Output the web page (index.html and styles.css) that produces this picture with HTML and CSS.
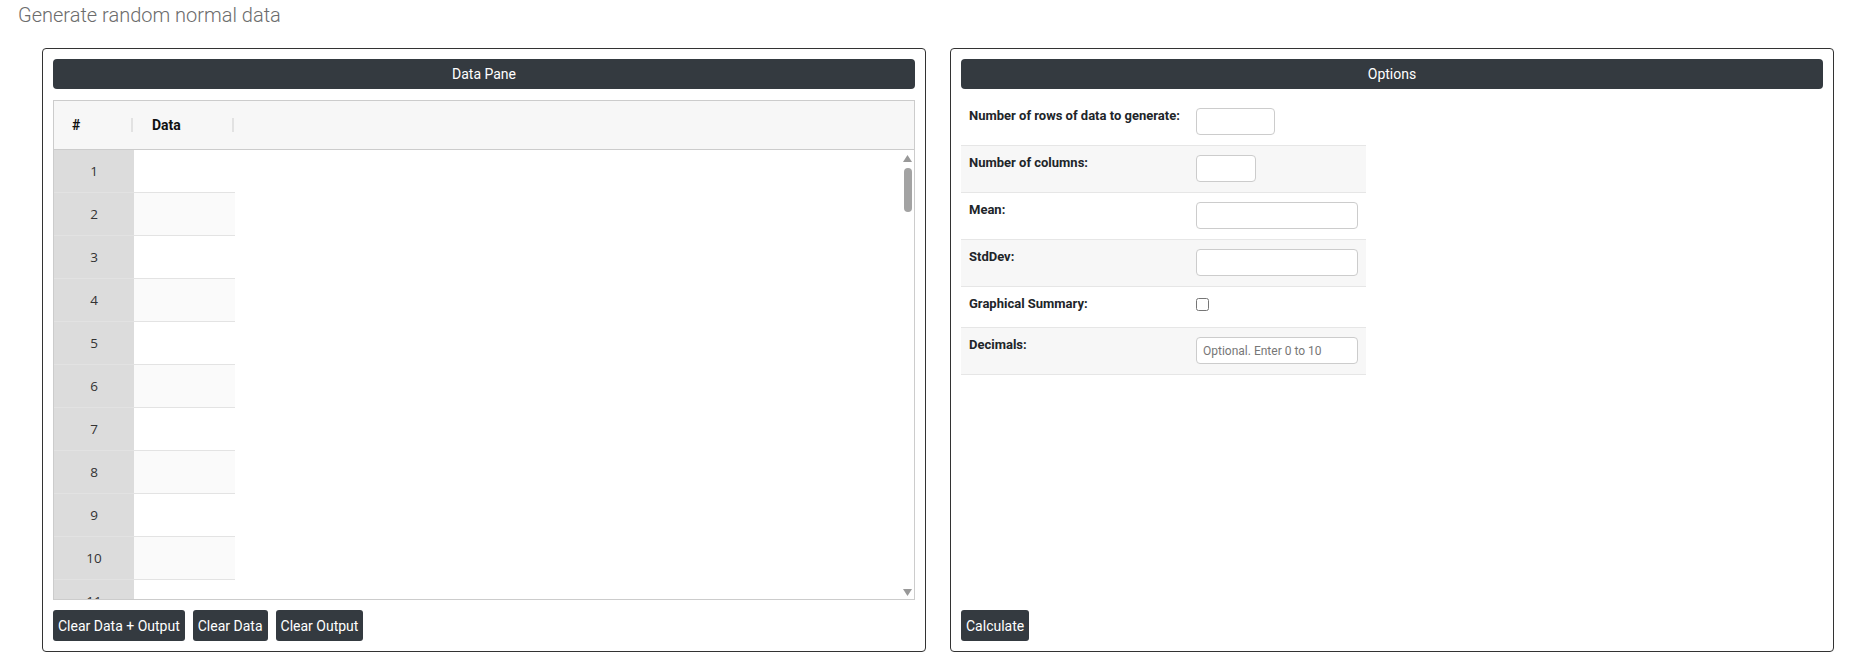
FILE: index.html
```html
<!DOCTYPE html>
<html lang="en">
<head>
    <meta charset="UTF-8">
    <meta name="viewport" content="width=device-width, initial-scale=1.0">
    <title>Generate random normal data</title>
    <link rel="stylesheet" href="styles.css">
</head>
<body>
    <h1 class="page-title">Generate random normal data</h1>
    <div class="panels">
        <div class="panel">
            <div class="panel-header">Data Pane</div>
            <div class="grid">
                <div class="grid-head">
                    <div class="hcell idx"><span class="hlabel">#</span><span class="hsep"></span></div>
                    <div class="hcell data"><span class="hlabel">Data</span><span class="hsep"></span></div>
                </div>
                <div class="grid-body">
                    <div class="grid-rows">
                        <div class="grow"><div class="gidx">1</div><div class="gcell"></div></div>
                        <div class="grow"><div class="gidx">2</div><div class="gcell"></div></div>
                        <div class="grow"><div class="gidx">3</div><div class="gcell"></div></div>
                        <div class="grow"><div class="gidx">4</div><div class="gcell"></div></div>
                        <div class="grow"><div class="gidx">5</div><div class="gcell"></div></div>
                        <div class="grow"><div class="gidx">6</div><div class="gcell"></div></div>
                        <div class="grow"><div class="gidx">7</div><div class="gcell"></div></div>
                        <div class="grow"><div class="gidx">8</div><div class="gcell"></div></div>
                        <div class="grow"><div class="gidx">9</div><div class="gcell"></div></div>
                        <div class="grow"><div class="gidx">10</div><div class="gcell"></div></div>
                        <div class="grow"><div class="gidx">11</div><div class="gcell"></div></div>
                    </div>
                    <div class="grid-fill"></div>
                    <div class="vscroll">
                        <svg class="arrow" width="9" height="7" viewBox="0 0 9 7"><polygon points="4.5,0 9,7 0,7" fill="#999"/></svg>
                        <div class="thumb"></div>
                        <div class="track-rest"></div>
                        <svg class="arrow" width="9" height="7" viewBox="0 0 9 7"><polygon points="0,0 9,0 4.5,7" fill="#999"/></svg>
                    </div>
                </div>
            </div>
            <div class="btn-row">
                <button class="btn">Clear Data + Output</button>
                <button class="btn">Clear Data</button>
                <button class="btn">Clear Output</button>
            </div>
        </div>
        <div class="panel">
            <div class="panel-header">Options</div>
            <table class="options">
                <tr>
                    <td class="opt-label">Number of rows of data to generate:</td>
                    <td><input type="text" class="opt-input w-rows"></td>
                </tr>
                <tr>
                    <td class="opt-label">Number of columns:</td>
                    <td><input type="text" class="opt-input w-cols"></td>
                </tr>
                <tr>
                    <td class="opt-label">Mean:</td>
                    <td><input type="text" class="opt-input w-full"></td>
                </tr>
                <tr>
                    <td class="opt-label">StdDev:</td>
                    <td><input type="text" class="opt-input w-full"></td>
                </tr>
                <tr class="check-row">
                    <td class="opt-label">Graphical Summary:</td>
                    <td><input type="checkbox" class="opt-check"></td>
                </tr>
                <tr>
                    <td class="opt-label">Decimals:</td>
                    <td><input type="text" class="opt-input w-full" placeholder="Optional. Enter 0 to 10"></td>
                </tr>
            </table>
            <div class="btn-row bottom">
                <button class="btn">Calculate</button>
            </div>
        </div>
    </div>
</body>
</html>
```

FILE: styles.css
```css
body {
    font-family: Roboto, "Liberation Sans", Arial, sans-serif;
    background-color: #fff;
    color: #212529;
    margin: 0;
    padding: 0;
}
.page-title {
    font-size: 20px;
    font-weight: 300;
    color: #6c6c6c;
    margin: 0;
    padding: 4px 0 0 18px;
    height: 48px;
    box-sizing: border-box;
    line-height: 23px;
}
.panels {
    display: flex;
    gap: 24px;
    padding: 0 36px 0 42px;
    height: 604px;
}
.panel {
    flex: 1;
    display: flex;
    flex-direction: column;
    border: 1px solid #333;
    border-radius: 4px;
    padding: 10px;
    min-width: 0;
}
.panel-header {
    background-color: #343a40;
    color: #fff;
    height: 30px;
    line-height: 30px;
    text-align: center;
    font-size: 14px;
    border-radius: 4px;
    margin-bottom: 10px;
}
.grid {
    border: 1px solid #ccc;
    height: 500px;
    box-sizing: border-box;
    display: flex;
    flex-direction: column;
    font-family: "Open Sans", sans-serif;
    margin-top: 1px;
}
.grid-head {
    display: flex;
    height: 48px;
    background-color: #f7f7f7;
    border-bottom: 1px solid #ccc;
}
.hcell {
    display: flex;
    align-items: center;
    font-family: Roboto, sans-serif;
    font-weight: bold;
    font-size: 14px;
    color: #111;
}
.hcell.idx {
    width: 80px;
}
.hcell.data {
    width: 101px;
}
.hlabel {
    flex: 1;
    padding-left: 18px;
}
.hsep {
    width: 2px;
    height: 14px;
    background-color: #e2e2e2;
    margin-right: 1px;
}
.grid-body {
    flex: 1;
    display: flex;
    overflow: hidden;
}
.grid-rows {
    display: flex;
    flex-direction: column;
}
.grow {
    display: flex;
    flex-shrink: 0;
    height: 43px;
}
.gidx {
    width: 80px;
    background-color: #dcdcdc;
    border-bottom: 1px solid #e2e2e2;
    display: flex;
    align-items: center;
    justify-content: center;
    font-size: 13.5px;
    color: #333;
}
.gcell {
    width: 101px;
    border-bottom: 1px solid #e3e3e3;
    background-color: #fff;
}
.grow:nth-child(even) .gcell {
    background-color: #fafafa;
}
.grid-fill {
    flex: 1;
}
.vscroll {
    width: 13px;
    display: flex;
    flex-direction: column;
    align-items: center;
    padding: 5px 0 3px;
}
.vscroll .arrow {
    flex-shrink: 0;
}
.thumb {
    width: 8px;
    height: 44px;
    border-radius: 4px;
    background-color: #a3a3a3;
    margin-top: 6px;
}
.track-rest {
    flex: 1;
}
.btn-row {
    display: flex;
    gap: 8px;
    margin-top: 10px;
}
.btn-row.bottom {
    margin-top: auto;
}
.btn {
    background-color: #343a40;
    color: #fff;
    border: none;
    border-radius: 3px;
    height: 31px;
    padding: 0 5px;
    font-family: Roboto, sans-serif;
    font-size: 14px;
    cursor: pointer;
}
.options {
    border-collapse: collapse;
    width: 405px;
    font-size: 13px;
}
.options td {
    border-bottom: 1px solid #e6e6e6;
    padding: 9px 0 10px;
    vertical-align: top;
}
.options tr:nth-child(even) td {
    background-color: #f7f7f7;
}
.opt-label {
    width: 227px;
    padding-left: 8px !important;
    font-weight: bold;
    color: #212529;
    line-height: 15px;
    padding-top: 9px !important;
}
.opt-input {
    display: block;
    height: 27px;
    box-sizing: border-box;
    border: 1px solid #ccc;
    border-radius: 4px;
    padding: 0 6px;
    font-family: Roboto, sans-serif;
    font-size: 12px;
    margin: 0;
}
.opt-input::placeholder {
    color: #777;
}
.w-rows {
    width: 79px;
}
.w-cols {
    width: 60px;
}
.w-full {
    width: 162px;
}
.check-row td {
    padding-top: 10px;
    padding-bottom: 16px;
}
.opt-check {
    display: block;
    width: 13px;
    height: 13px;
    margin: 1px 0 0 0;
}
```
